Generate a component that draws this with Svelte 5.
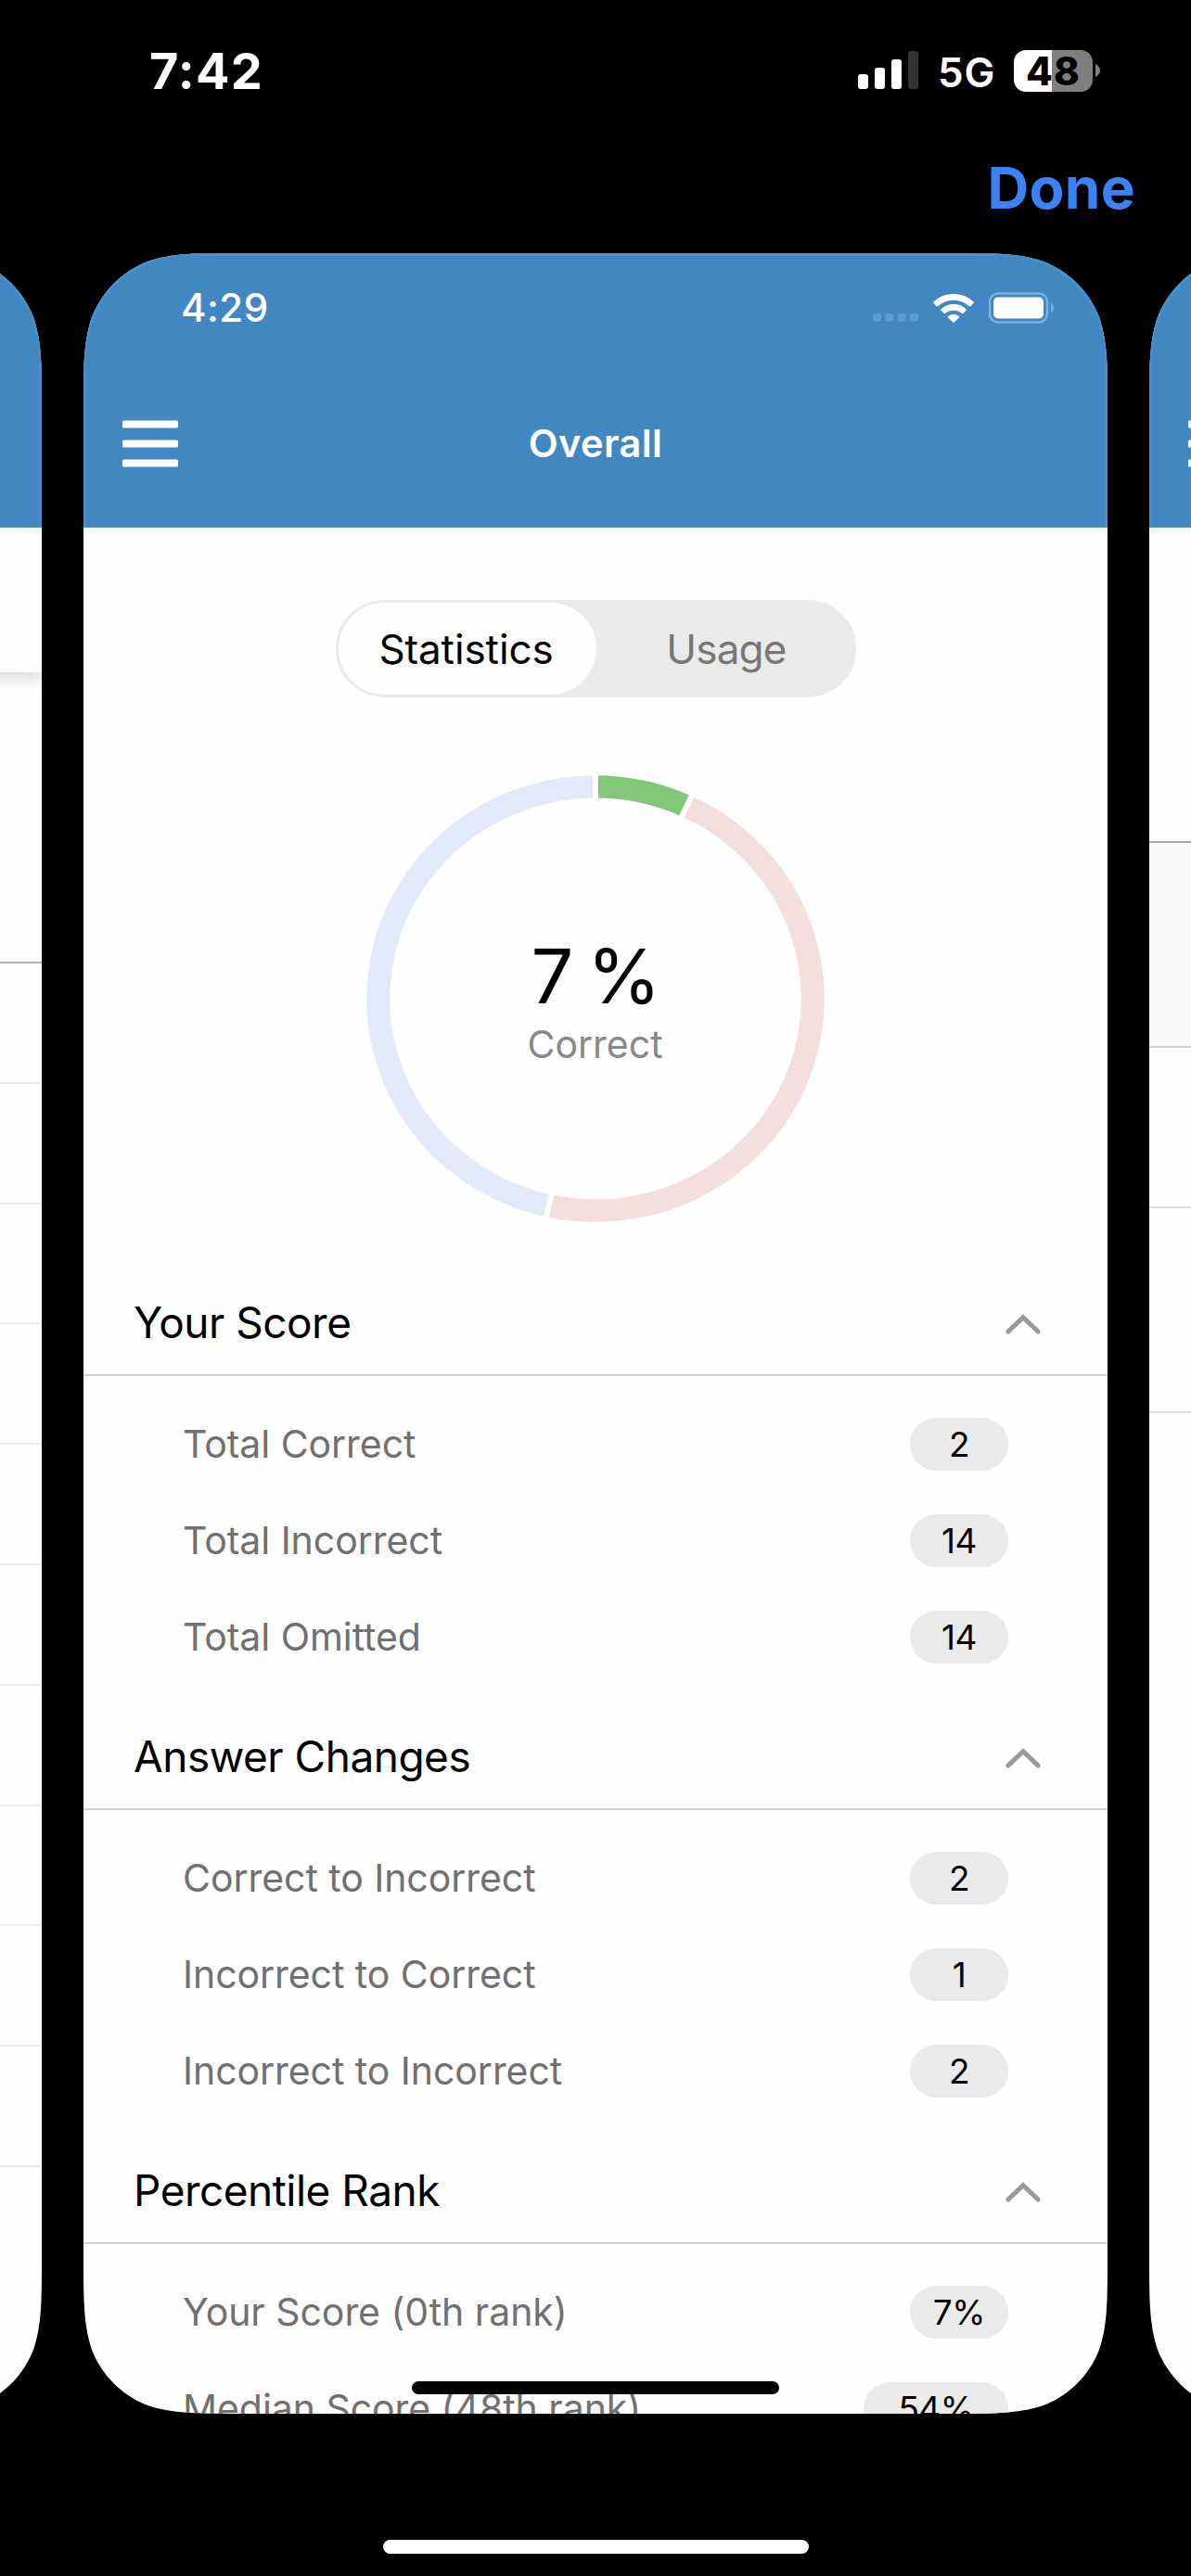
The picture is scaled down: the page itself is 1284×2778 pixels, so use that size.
<script>
  const sections = [
    {
      title: 'Your Score',
      rows: [
        { label: 'Total Correct', value: '2' },
        { label: 'Total Incorrect', value: '14' },
        { label: 'Total Omitted', value: '14' }
      ]
    },
    {
      title: 'Answer Changes',
      rows: [
        { label: 'Correct to Incorrect', value: '2' },
        { label: 'Incorrect to Correct', value: '1' },
        { label: 'Incorrect to Incorrect', value: '2' }
      ]
    },
    {
      title: 'Percentile Rank',
      rows: [
        { label: 'Your Score (0th rank)', value: '7%' },
        { label: 'Median Score (48th rank)', value: '54%', wide: true }
      ]
    }
  ];

  const slices = [
    { from: 0, to: 24.8, color: '#82c677' },
    { from: 24.8, to: 192.4, color: '#f5dfde' },
    { from: 192.4, to: 360, color: '#e2e9fa' }
  ];

  const R = 234.3;

  function point(deg, r) {
    const a = (deg * Math.PI) / 180;
    return `${(Math.sin(a) * r).toFixed(2)} ${(-Math.cos(a) * r).toFixed(2)}`;
  }

  function arc({ from, to }) {
    const large = to - from > 180 ? 1 : 0;
    return `M${point(from, R)}A${R} ${R} 0 ${large} 1 ${point(to, R)}`;
  }

  const historyRows = Array.from({ length: 10 }, (_, i) => i);
</script>

{#snippet menuIcon()}
  <svg class="menu" width="60" height="52" viewBox="0 0 60 52" fill="#fff">
    <rect y="0.5" width="60" height="8" rx="1.5" />
    <rect y="21.5" width="60" height="8" rx="1.5" />
    <rect y="42.5" width="60" height="8" rx="1.5" />
  </svg>
{/snippet}

<div class="screen">
  <header class="device-status">
    <span class="clock">7:42</span>
    <div class="indicators">
      <svg class="signal" width="66" height="42" viewBox="0 0 66 42" fill="#fff">
        <rect x="0" y="25" width="11" height="16" rx="3" />
        <rect x="18" y="18" width="11" height="23" rx="3" />
        <rect x="36" y="9" width="11" height="32" rx="3" />
        <rect x="54" y="0" width="11" height="41" rx="3" fill="#333" />
      </svg>
      <span class="network">5G</span>
      <div class="battery"><span>48</span></div>
      <svg class="nub" width="5" height="14" viewBox="0 0 5 14"><path d="M0 0C3 1.5 5 4 5 7S3 12.500 0 14Z" fill="#7f7f7f" /></svg>
    </div>
  </header>

  <div class="toolbar"><span class="done">Done</span></div>

  <main class="carousel">
    <section class="card">
      <div class="blue"></div>
      <div class="search"></div>
      <div class="list-head"></div>
      {#each historyRows as row (row)}
        <div class="list-row"></div>
      {/each}
    </section>

    <section class="card">
      <div class="blue">
        <div class="app-status">
          <span class="app-clock">4:29</span>
          <div class="app-icons">
            <svg class="dots" width="49" height="9" viewBox="0 0 49 9" fill="#5b9dd3">
              <rect x="0" width="9" height="9" rx="3" />
              <rect x="13.300" width="9" height="9" rx="3" />
              <rect x="26.600" width="9" height="9" rx="3" />
              <rect x="40" width="9" height="9" rx="3" />
            </svg>
            <svg class="wifi" width="44" height="31" viewBox="0 0 44 31" fill="#fff">
              <path d="M22 0C30.400 0 37.600 3 43.500 8.400Q44.300 9.200 43.600 10L40.400 13.200Q39.700 13.800 38.900 13.200C34.200 9 28.500 6.700 22 6.700S9.800 9 5.100 13.200Q4.300 13.800 3.600 13.200L.4 10Q-.3 9.200 .5 8.400C6.400 3 13.600 0 22 0Z" />
              <path d="M22 11.100C27.300 11.100 31.900 13 35.500 16.300Q36.300 17.100 35.600 17.800L32.300 21Q31.600 21.700 30.800 21C28.300 18.900 25.400 17.800 22 17.800S15.700 18.900 13.200 21Q12.400 21.700 11.700 21L8.400 17.800Q7.700 17.100 8.500 16.300C12.100 13 16.700 11.100 22 11.100Z" />
              <path d="M22 22C24.400 22 26.300 22.800 27.900 24.100Q28.600 24.800 28 25.500L22.700 30.600Q22 31.200 21.300 30.600L16 25.500Q15.400 24.800 16.100 24.100C17.700 22.800 19.600 22 22 22Z" />
            </svg>
            <svg class="cell" width="71" height="34" viewBox="0 0 71 34">
              <rect x="1" y="1.500" width="62" height="31" rx="9" fill="none" stroke="#7bb3df" stroke-width="2.400" />
              <rect x="5" y="5.500" width="54" height="23" rx="5" fill="#fff" />
              <path d="M67 12C69 13 70 14.800 70 17S69 21 67 22Z" fill="#7bb3df" />
            </svg>
          </div>
        </div>
        <div class="nav">
          {@render menuIcon()}
          <h1>Overall</h1>
        </div>
      </div>

      <div class="tabs">
        <div class="tab active"><span>Statistics</span></div>
        <div class="tab usage"><span>Usage</span></div>
      </div>

      <div class="ring">
        <svg width="494" height="482" viewBox="-247 -247 494 494" preserveAspectRatio="none" fill="none">
          {#each slices as s (s.from)}
            <path d={arc(s)} stroke={s.color} stroke-width="25" />
          {/each}
          {#each slices as s (s.from)}
            <path d="M{point(s.from, 215)}L{point(s.from, 250)}" stroke="#fefefe" stroke-width="6" />
          {/each}
        </svg>
        <div class="score">
          <span class="percent">7 %</span>
          <span class="caption">Correct</span>
        </div>
      </div>

      <div class="sections">
        {#each sections as section (section.title)}
          <div class="section">
            <div class="section-head">
              <h2>{section.title}</h2>
              <svg width="38" height="22" viewBox="0 0 38 22" fill="none" stroke="#9a9a9a" stroke-width="5" stroke-linecap="round" stroke-linejoin="miter">
                <path d="M3 18.900L19 3.600L35 18.900" />
              </svg>
            </div>
            <div class="rows">
              {#each section.rows as row (row.label)}
                <div class="row">
                  <span class="label">{row.label}</span>
                  <span class="pill" class:wide={row.wide}>{row.value}</span>
                </div>
              {/each}
            </div>
          </div>
        {/each}
      </div>
      <div class="app-home"></div>
    </section>

    <section class="card">
      <div class="blue">
        <div class="app-status"></div>
        <div class="nav">{@render menuIcon()}</div>
      </div>
      <div class="blank"></div>
      <div class="shade"></div>
      <div class="cell-row"></div>
      <div class="cell-row tall"></div>
    </section>
  </main>

  <footer><div class="home"></div></footer>
</div>

<style>
  :global(body) {
    background: #000;
  }
  .screen {
    width: 1284px;
    height: 2778px;
    background: #000;
    overflow: hidden;
    display: flex;
    flex-direction: column;
    font-family: Inter, 'Liberation Sans', sans-serif;
    white-space: nowrap;
  }
  .screen * {
    box-sizing: border-box;
  }
  svg {
    display: block;
    flex: none;
  }
  .device-status {
    height: 155px;
    flex: none;
    display: flex;
    justify-content: space-between;
    align-items: center;
    padding: 0 98px 3px 161px;
    color: #fff;
  }
  .clock {
    font-size: 54px;
    font-weight: 700;
    letter-spacing: 1.2px;
  }
  .indicators {
    display: flex;
    align-items: center;
  }
  .network {
    font-size: 44px;
    font-weight: 600;
    letter-spacing: 0.8px;
    margin: 4px 0 0 20px;
    width: 82px;
  }
  .battery {
    width: 85px;
    height: 45px;
    border-radius: 13px;
    background: linear-gradient(90deg, #fff 41px, #7f7f7f 41px);
    color: #000;
    font-size: 42px;
    font-weight: 800;
    display: flex;
    align-items: center;
    justify-content: center;
    letter-spacing: 1px;
  }
  .nub {
    margin-left: 3px;
  }
  .toolbar {
    height: 118px;
    flex: none;
    display: flex;
    align-items: center;
    justify-content: flex-end;
    padding: 0 60px 23px 0;
  }
  .done {
    font-size: 62px;
    font-weight: 700;
    color: #3b82f7;
    letter-spacing: 0.3px;
  }
  .carousel {
    height: 2330px;
    flex: none;
    display: flex;
    justify-content: center;
    gap: 45px;
  }
  .card {
    position: relative;
    width: 1104px;
    height: 2330px;
    flex: none;
    background: #fefefe;
    overflow: hidden;
    display: flex;
    flex-direction: column;
    clip-path: path('M171.200 0H932.800C982.100 0 1006.700 0 1033.300 8.400C1062.200 18.900 1085.100 41.800 1095.600 70.700C1104 97.300 1104 121.900 1104 171.200V2158.800C1104 2208.100 1104 2232.700 1095.600 2259.300C1085.100 2288.200 1062.200 2311.100 1033.300 2321.600C1006.700 2330 982.100 2330 932.800 2330H171.200C121.900 2330 97.300 2330 70.700 2321.600C41.800 2311.100 18.900 2288.200 8.400 2259.300C0 2232.700 0 2208.100 0 2158.800V171.200C0 121.900 0 97.300 8.400 70.700C18.900 41.800 41.800 18.900 70.700 8.400C97.300 0 121.900 0 171.200 0Z');
  }
  .blue {
    height: 296px;
    flex: none;
    background: #4188c3;
    border-radius: 112px 112px 0 0;
    box-shadow:
      inset 3px 0 #498fc8,
      inset -3px 0 #498fc8,
      inset 0 3px #498fc8,
      0 -120px 0 120px #498fc8;
    clip-path: inset(0);
  }
  .app-status {
    height: 118px;
    padding: 0 57px 0 105px;
    display: flex;
    justify-content: space-between;
    align-items: center;
    color: #fff;
  }
  .app-clock {
    font-size: 42px;
    font-weight: 500;
    letter-spacing: 0.5px;
    margin-bottom: 1px;
  }
  .app-icons {
    display: flex;
    align-items: center;
  }
  .dots {
    margin: 21px 16px 0 0;
  }
  .wifi {
    margin-right: 16px;
  }
  .nav {
    height: 174px;
    padding: 1px 42px 0;
    display: grid;
    grid-template-columns: 1fr auto 1fr;
    align-items: center;
    color: #fff;
  }
  h1,
  h2 {
    margin: 0;
  }
  h1 {
    font-size: 41.5px;
    font-weight: 600;
    letter-spacing: 0.4px;
    padding-bottom: 2px;
  }
  .tabs {
    align-self: center;
    width: 561px;
    height: 105px;
    margin-top: 78px;
    flex: none;
    border: 3px solid #eaeaea;
    border-radius: 53px;
    background: #eaeaea;
    display: flex;
    font-size: 44px;
    letter-spacing: -0.1px;
    color: #777;
  }
  .tab {
    width: 278px;
    flex: none;
    display: flex;
    align-items: center;
    justify-content: center;
  }
  .tab.active {
    background: #fefefe;
    border-radius: 50px;
    color: #000;
    padding-right: 2px;
  }
  .tab.usage {
    letter-spacing: -0.8px;
    padding-left: 3px;
  }
  .ring {
    align-self: center;
    margin-top: 84px;
    height: 482px;
    flex: none;
    display: grid;
    place-items: center;
  }
  .ring > * {
    grid-area: 1 / 1;
  }
  .score {
    display: flex;
    flex-direction: column;
    align-items: center;
    padding: 1px 1px 0 0;
  }
  .percent {
    font-size: 81px;
    line-height: 98px;
    word-spacing: -8px;
    padding-left: 2px;
  }
  .caption {
    font-size: 41px;
    line-height: 50px;
    color: #888;
    margin-top: -1px;
  }
  .sections {
    margin-top: 52px;
  }
  .section-head {
    height: 114px;
    border-bottom: 2px solid #d4d4d4;
    display: flex;
    align-items: center;
    justify-content: space-between;
    padding: 0 72px 0 54px;
  }
  .section-head svg {
    margin-top: 3px;
  }
  h2 {
    font-size: 46px;
    font-weight: 400;
    letter-spacing: -0.5px;
    color: #000;
  }
  .rows {
    padding: 21px 107px 21px 107px;
  }
  .row {
    height: 104px;
    display: flex;
    align-items: center;
    justify-content: space-between;
  }
  .label {
    font-size: 41px;
    letter-spacing: -0.05px;
    color: #707070;
  }
  .pill {
    width: 106px;
    height: 57px;
    border-radius: 29px;
    background: #eaeaea;
    color: #000;
    font-size: 37px;
    display: flex;
    align-items: center;
    justify-content: center;
    letter-spacing: -0.5px;
  }
  .pill.wide {
    width: 156px;
  }
  .app-home {
    position: absolute;
    left: 354px;
    bottom: 21px;
    width: 396px;
    height: 14px;
    border-radius: 7px;
    background: #000;
  }
  .search {
    height: 156px;
    flex: none;
    box-shadow: 0 6px 14px rgba(0, 0, 0, 0.16);
  }
  .list-head {
    height: 314px;
    flex: none;
    border-bottom: 2px solid #b0b0b0;
  }
  .list-row {
    height: 129.8px;
    flex: none;
    border-bottom: 2px solid #ececec;
  }
  .blank {
    height: 338px;
    flex: none;
  }
  .shade {
    height: 223px;
    flex: none;
    background: #f8f8f8;
    border-top: 2px solid #a8a8a8;
    border-bottom: 2px solid #cfcfcf;
  }
  .cell-row {
    height: 173px;
    flex: none;
    border-bottom: 2px solid #dcdcdc;
  }
  .cell-row.tall {
    height: 221px;
  }
  footer {
    flex: 1;
    display: flex;
    justify-content: center;
    align-items: flex-end;
    padding-bottom: 24px;
  }
  .home {
    width: 459px;
    height: 15px;
    border-radius: 8px;
    background: #fff;
  }
</style>
